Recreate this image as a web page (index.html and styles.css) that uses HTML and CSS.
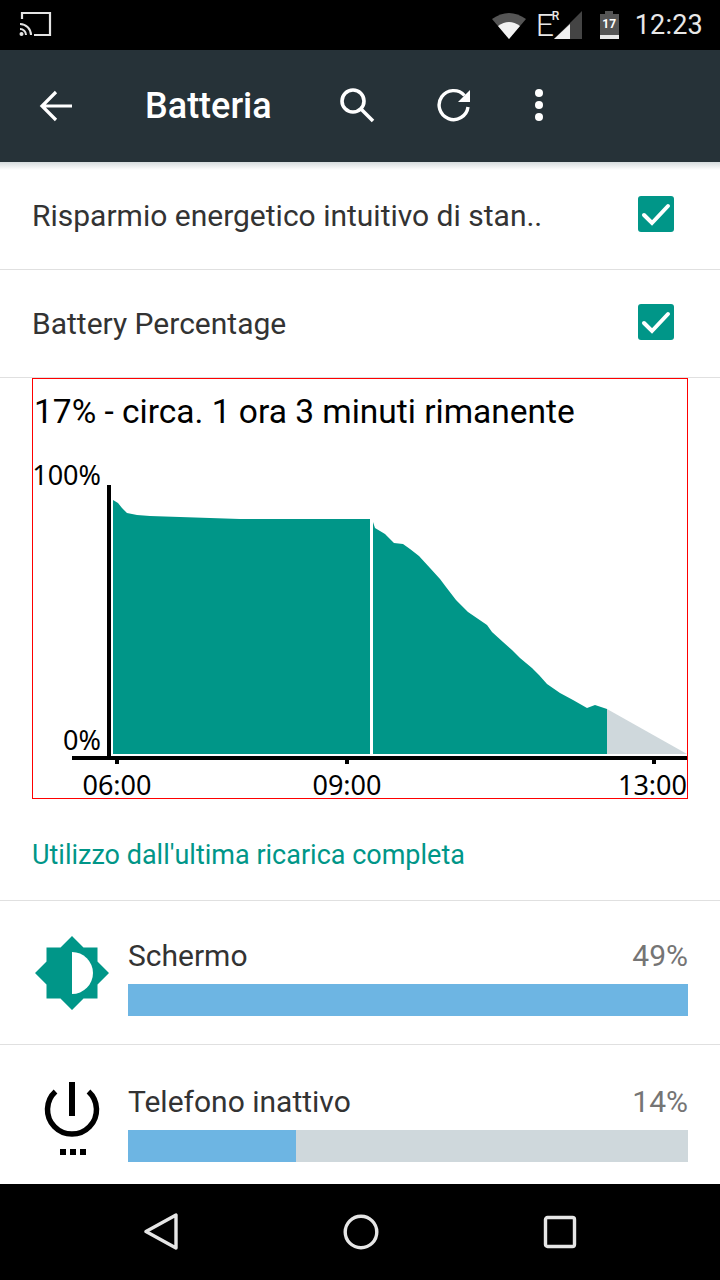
FILE: index.html
```html
<!DOCTYPE html>
<html lang="it">
<head>
<meta charset="utf-8">
<title>Batteria</title>
<link rel="stylesheet" href="styles.css">
</head>
<body>
<div class="screen">
  <header class="statusbar">
    <svg class="cast" width="34" height="26" viewBox="0 0 34 26"><path d="M3 8V2h28v22H15" fill="none" stroke="#e4e4e4" stroke-width="2.2"/><path d="M1 13a11 11 0 0 1 11 11M1 18a6 6 0 0 1 6 6" fill="none" stroke="#e4e4e4" stroke-width="2"/><circle cx="2.5" cy="23" r="2" fill="#e4e4e4"/></svg>
    <div class="status-right">
      <svg class="wifi" width="36" height="30" viewBox="0 0 36 30"><path d="M1 9Q18-3 35 9L18 29Z" fill="#555"/><path d="M7 16Q18 8 29 16L18 29Z" fill="#f2f2f2"/></svg>
      <span class="net">E<sup class="net-r">R</sup></span>
      <svg class="signal" width="30" height="30" viewBox="0 0 30 30"><path d="M28 1V29H0Z" fill="#444"/><path d="M16 14V29H0Z" fill="#efefef"/></svg>
      <div class="batt"><span class="batt-nub"></span><span class="batt-body">17</span></div>
      <span class="clock">12:23</span>
    </div>
  </header>
  <nav class="toolbar">
    <svg class="back" width="34" height="32" viewBox="0 0 34 32"><path d="M33 16H3M17 2 3 16l14 14" fill="none" stroke="#fff" stroke-width="3.2"/></svg>
    <h1 class="title">Batteria</h1>
    <svg class="search" width="36" height="36" viewBox="0 0 36 36"><circle cx="14" cy="14" r="11" fill="none" stroke="#fff" stroke-width="3.6"/><path d="M22 22 34 34" stroke="#fff" stroke-width="3.6"/></svg>
    <svg class="refresh" width="34" height="34" viewBox="0 0 34 34"><path d="M27.5 7.5A14.5 14.5 0 1 0 31 19" fill="none" stroke="#fff" stroke-width="3.4"/><path d="M33 2V14H21Z" fill="#fff"/></svg>
    <svg class="more" width="10" height="34" viewBox="0 0 10 34"><circle cx="5" cy="5" r="4" fill="#fff"/><circle cx="5" cy="17" r="4" fill="#fff"/><circle cx="5" cy="29" r="4" fill="#fff"/></svg>
  </nav>
  <div class="shadow"></div>
  <main class="content">
    <div class="pref pref-first">
      <span class="pref-label">Risparmio energetico intuitivo di stan..</span>
      <svg class="check" width="36" height="36" viewBox="0 0 36 36"><rect width="36" height="36" rx="3" fill="#009688"/><path d="M6 19l8 8L30 10" fill="none" stroke="#fff" stroke-width="4" stroke-linecap="round" stroke-linejoin="miter" transform="translate(0 0)"/></svg>
    </div>
    <div class="pref pref-second">
      <span class="pref-label">Battery Percentage</span>
      <svg class="check" width="36" height="36" viewBox="0 0 36 36"><rect width="36" height="36" rx="3" fill="#009688"/><path d="M6 19l8 8L30 10" fill="none" stroke="#fff" stroke-width="4" stroke-linecap="round"/></svg>
    </div>
    <section class="chart">
      <svg class="chart-svg" width="654" height="419" viewBox="33 379 654 419">
        <text class="chart-head" x="34" y="423">17% - circa. 1 ora 3 minuti rimanente</text>
        <text class="chart-tick" x="101" y="485" text-anchor="end">100%</text>
        <text class="chart-tick" x="101" y="750" text-anchor="end">0%</text>
        <path fill="#009688" d="M113 754V500L118 503 122 508 127 513 137 515 150 516 240 519H370V754Z"/>
        <path fill="#009688" d="M373 754V522L375 528 380 531 385 534 394 543 403 544 410 549 419 556 430 568 440 579 446 587 456 600 468 612 487 625 492 632 503 642 512 650 520 658 532 668 539 675 547 684 560 693 573 700 587 708 595 705 607 709V754Z"/>
        <path fill="#cfd8dc" d="M607 709 687 754H607Z"/>
        <rect x="107" y="485" width="4" height="275" fill="#000"/>
        <rect x="72" y="756" width="616" height="4" fill="#000"/>
        <rect x="115" y="760" width="4" height="4" fill="#000"/>
        <rect x="345" y="760" width="4" height="4" fill="#000"/>
        <rect x="652" y="760" width="4" height="4" fill="#000"/>
        <text class="chart-tick" x="117" y="795" text-anchor="middle">06:00</text>
        <text class="chart-tick" x="347" y="795" text-anchor="middle">09:00</text>
        <text class="chart-tick" x="687" y="795" text-anchor="end">13:00</text>
      </svg>
    </section>
    <h2 class="section-title">Utilizzo dall'ultima ricarica completa</h2>
    <div class="usage usage-first">
      <svg class="usage-icon" width="76" height="76" viewBox="0 0 76 76"><path fill="#009688" d="M38 1 49.500 12.500H63.500V26.500L75 38 63.500 49.500V63.500H49.500L38 75 26.500 63.500H12.500V49.500L1 38 12.500 26.500V12.500H26.500Z"/><path fill="#fff" d="M38 17A21 21 0 0 1 38 59Z"/></svg>
      <div class="usage-body">
        <div class="usage-text"><span class="usage-name">Schermo</span><span class="usage-pct">49%</span></div>
        <div class="bar"><div class="bar-fill" style="width:100%"></div></div>
      </div>
    </div>
    <div class="usage usage-second">
      <svg class="usage-icon" width="76" height="76" viewBox="0 0 76 76"><path d="M21.500 10.500A24.500 24.500 0 1 0 54.500 10.500" fill="none" stroke="#000" stroke-width="5.500"/><rect x="35" y="1" width="6" height="34" fill="#000"/><rect x="26" y="68" width="6" height="6" fill="#000"/><rect x="36" y="68" width="6" height="6" fill="#000"/><rect x="46" y="68" width="6" height="6" fill="#000"/></svg>
      <div class="usage-body">
        <div class="usage-text"><span class="usage-name">Telefono inattivo</span><span class="usage-pct">14%</span></div>
        <div class="bar"><div class="bar-fill" style="width:30%"></div></div>
      </div>
    </div>
  </main>
  <footer class="navbar">
    <svg width="36" height="38" viewBox="0 0 36 38"><path d="M33 2V35L3 18.500Z" fill="none" stroke="#e6e6e6" stroke-width="3.400" stroke-linejoin="round"/></svg>
    <svg width="36" height="36" viewBox="0 0 36 36"><circle cx="18" cy="18" r="15.800" fill="none" stroke="#e6e6e6" stroke-width="3.400"/></svg>
    <svg width="34" height="34" viewBox="0 0 34 34"><rect x="2.500" y="2.500" width="29" height="29" rx="2" fill="none" stroke="#e6e6e6" stroke-width="3.400"/></svg>
  </footer>
</div>
</body>
</html>
```
FILE: styles.css
```css
* { box-sizing: border-box; }
html, body { margin: 0; padding: 0; background: #fff; }
.screen {
  width: 720px;
  height: 1280px;
  display: flex;
  flex-direction: column;
  overflow: hidden;
  font-family: Roboto, "Liberation Sans", sans-serif;
}
.statusbar {
  height: 50px;
  flex: none;
  background: #000;
  display: flex;
  align-items: center;
  justify-content: space-between;
  padding: 0 17px 0 19px;
}
.cast { margin-top: -2px; }
.status-right { display: flex; align-items: center; }
.wifi { margin-right: 9px; }
.net {
  color: #e8e8e8;
  font-size: 32px;
  font-weight: 300;
  line-height: 30px;
  width: 18px;
  position: relative;
}
.net-r {
  position: absolute;
  left: 16px;
  top: -1px;
  font-size: 12px;
  line-height: 14px;
  font-weight: 500;
  color: #e8e8e8;
}
.signal { margin-right: 16px; margin-left: 0; }
.batt { display: flex; flex-direction: column; align-items: center; width: 19px; margin-right: 16px; }
.batt-nub { width: 8px; height: 3px; background: #555; }
.batt-body {
  width: 19px;
  height: 25px;
  background: #555;
  border-bottom: 4px solid #e8e8e8;
  color: #fff;
  font-size: 12px;
  font-weight: 700;
  line-height: 20px;
  text-align: center;
}
.clock { color: #e8e8e8; font-size: 27px; line-height: 30px; letter-spacing: 0.2px; }
.toolbar {
  height: 112px;
  flex: none;
  background: #263238;
  display: flex;
  align-items: center;
  padding-left: 39px;
}
.title {
  margin: 0 0 0 72px;
  width: 194px;
  color: #fff;
  font-size: 36px;
  font-weight: 500;
  line-height: 112px;
}
.search { margin-left: 0; margin-top: -2px; }
.refresh { margin-left: 62px; margin-top: -2px; }
.more { margin-left: 63px; margin-top: -2px; }
.shadow { height: 8px; flex: none; background: linear-gradient(#d5dbdd, #fff); }
.content { flex: 1; min-height: 0; overflow: hidden; }
.pref {
  display: flex;
  align-items: center;
  justify-content: space-between;
  padding: 0 46px 0 32px;
  border-bottom: 1px solid #e0e0e0;
}
.pref-first { height: 100px; padding-bottom: 8px; }
.pref-second { height: 108px; }
.pref-label { font-size: 30px; color: #333; }
.check { margin-top: -4px; }
.chart {
  width: 656px;
  height: 421px;
  margin-left: 32px;
  border: 1px solid #f00;
}
.chart-svg { display: block; }
.chart-head { font-size: 33.500px; fill: #000; font-family: Roboto, sans-serif; }
.chart-tick { font-size: 27px; fill: #000; font-family: "Noto Sans", sans-serif; }
.section-title {
  margin: 0;
  height: 102px;
  padding: 38px 0 0 32px;
  font-size: 27px;
  font-weight: 400;
  line-height: 36px;
  color: #009688;
  border-bottom: 1px solid #e0e0e0;
}
.usage {
  display: flex;
  padding: 34px 32px 0 34px;
}
.usage-first { height: 144px; border-bottom: 1px solid #e0e0e0; }
.usage-second { height: 138px; padding-top: 36px; }
.usage-icon { flex: none; margin-right: 18px; }
.usage-second .usage-icon { margin-top: 0; }
.usage-body { flex: 1; }
.usage-text {
  display: flex;
  justify-content: space-between;
  height: 49px;
  line-height: 42px;
}
.usage-name { font-size: 30px; color: #333; }
.usage-pct { font-size: 30px; color: #757575; }
.bar { height: 32px; background: #cfd8dc; }
.bar-fill { height: 100%; background: #6db5e3; }
.navbar {
  height: 96px;
  flex: none;
  background: #000;
  display: flex;
  align-items: center;
  justify-content: space-between;
  padding: 0 143px;
}
```
